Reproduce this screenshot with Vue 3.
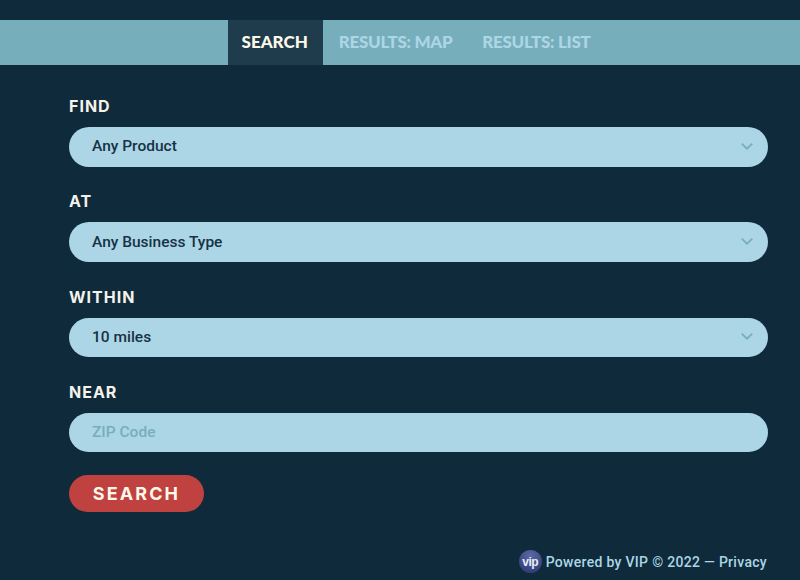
<template>
  <div class="page">
    <nav class="tabs">
      <a v-for="tab in tabs" :key="tab" class="tab" :class="{ active: tab === 'Search' }">{{ tab }}</a>
    </nav>

    <form class="form" @submit.prevent>
      <div v-for="field in selects" :key="field.label" class="field">
        <label class="label">{{ field.label }}</label>
        <div class="control">
          <span>{{ field.value }}</span>
          <svg class="chevron" width="12" height="7" viewBox="0 0 12 7">
            <path d="M.7.7L6 5.7 11.300.7" fill="none" stroke="#77aebb" stroke-width="1.800" />
          </svg>
        </div>
      </div>
      <div class="field near">
        <label class="label">Near</label>
        <div class="control placeholder">ZIP Code</div>
      </div>
      <button class="submit" type="submit">Search</button>
    </form>

    <footer class="footer">
      <span class="vip">vip</span>
      <span>Powered by VIP © 2022 — Privacy</span>
    </footer>
  </div>
</template>

<script setup>
const tabs = ['Search', 'Results: Map', 'Results: List']
const selects = [
  { label: 'Find', value: 'Any Product' },
  { label: 'At', value: 'Any Business Type' },
  { label: 'Within', value: '10 miles' },
]
</script>

<style>
html, body { background: #0f2a3a; }
</style>

<style scoped>
.page {
  width: 800px;
  height: 580px;
  background: #0f2a3a;
  padding-top: 20px;
  box-sizing: border-box;
  overflow: hidden;
  font-family: 'Roboto', sans-serif;
  color: #acd6e6;
}

.tabs {
  display: flex;
  justify-content: center;
  height: 45px;
  background: #77aebb;
  padding-left: 33px;
}
.tab {
  display: flex;
  align-items: center;
  padding: 0 15px 3px;
  font-family: 'Lato', sans-serif;
  font-size: 17px;
  font-weight: 900;
  letter-spacing: -0.3px;
  text-transform: uppercase;
  color: #acd6e6;
}
.tab.active {
  background: #1e3c4c;
  color: #fdf8e8;
  letter-spacing: 0;
  padding: 0 15px 3px 14px;
  margin-right: 1px;
}

.form {
  padding: 31px 32px 0 69px;
  display: flex;
  flex-direction: column;
  align-items: stretch;
}
.field { margin-bottom: 24.700px; }
.field.near { margin-bottom: 23px; }
.label {
  display: block;
  height: 20px;
  margin-bottom: 11px;
  line-height: 20px;
  font-family: 'Inter', sans-serif;
  font-size: 16px;
  font-weight: 700;
  letter-spacing: 1px;
  text-transform: uppercase;
  color: #f4f2ea;
}
.control {
  height: 39.600px;
  border-radius: 20px;
  background: #acd6e6;
  padding: 0 15px 1px 23px;
  box-sizing: border-box;
  display: flex;
  align-items: center;
  justify-content: space-between;
  font-size: 15.500px;
  font-weight: 500;
  color: #173245;
}
.control.placeholder { color: #77aebb; }

.submit {
  align-self: flex-start;
  width: 135px;
  height: 37px;
  padding: 0;
  border: 0;
  border-radius: 19px;
  background: #bf4140;
  font-family: 'Inter', sans-serif;
  font-size: 18px;
  font-weight: 700;
  letter-spacing: 2.100px;
  text-transform: uppercase;
  color: #fdf8e8;
}

.footer {
  display: flex;
  justify-content: flex-end;
  align-items: center;
  gap: 4px;
  margin-top: 38px;
  padding-right: 33px;
  font-size: 14px;
  font-weight: 500;
  letter-spacing: 0.3px;
}
.vip {
  width: 23px;
  height: 23px;
  border-radius: 50%;
  background: radial-gradient(circle at 50% 25%, #5a6aa8, #28326c);
  display: flex;
  align-items: center;
  justify-content: center;
  font-family: 'Liberation Sans', sans-serif;
  font-size: 12px;
  font-weight: 700;
  letter-spacing: -0.5px;
  color: #e8eef5;
}
</style>
